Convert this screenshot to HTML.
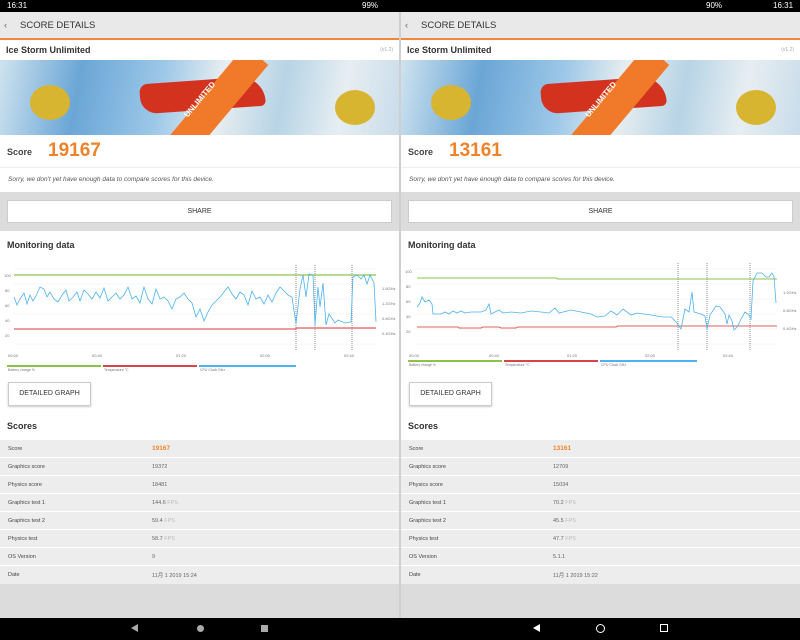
<!DOCTYPE html>
<html><head><meta charset="utf-8"><style>
*{margin:0;padding:0;box-sizing:border-box}
body{width:800px;height:640px;overflow:hidden;background:#dcdcdc;font-family:"Liberation Sans","Noto Sans CJK JP",sans-serif;position:relative}
.sb{position:absolute;left:0;top:0;width:800px;height:12px;background:#000;color:#fff;font-size:8px;line-height:12px}
.nav{position:absolute;left:0;top:618px;width:800px;height:22px;background:#000}
.panel{position:absolute;top:12px;width:399px;height:606px;background:#dcdcdc;overflow:hidden}
.hdr{height:28px;background:#e9e9e9;border-bottom:2px solid #f0883a;font-size:9.5px;color:#333;line-height:27px;padding-left:20px;position:relative}
.card{background:#fff}
.t1{height:20px;font-size:9px;font-weight:bold;color:#333;line-height:20px;padding-left:6px;position:relative}
.t1 span{position:absolute;right:6px;font-size:5px;color:#aaa;font-weight:normal}
.ban{height:75px;position:relative;overflow:hidden;background:linear-gradient(100deg,#cfe3ef 0%,#6aa6d6 20%,#9cc7e8 40%,#e8eef0 55%,#b7d4e6 70%,#e7eef2 85%,#c9dcea 100%)}
.score{height:33px;border-bottom:1px solid #eee;position:relative}
.score b{position:absolute;left:7px;top:12px;font-size:9px;color:#444}
.score i{position:absolute;left:48px;top:5px;font-size:19px;font-weight:bold;color:#f0832a;font-style:normal}
.sorry{height:24px;font-size:6.5px;font-style:italic;color:#555;line-height:24px;padding-left:8px}
.share{margin:8px 7px 0;height:23px;background:#fff;border:1px solid #ccc;text-align:center;font-size:7px;line-height:22px;color:#333}
.mon{margin-top:8px;background:#fff;height:180px;position:relative}
.mon h3{font-size:9px;color:#333;padding:9px 7px;height:26px}
.dg{position:absolute;left:8px;top:151px;width:83px;height:24px;border:1px solid #ccc;box-shadow:0 1px 2px #ccc;font-size:7px;line-height:22px;text-align:center;color:#333}
.sc{background:#fff;height:28px;margin-top:0;font-size:9px;font-weight:bold;color:#333;padding:10px 7px}
table{width:100%;border-collapse:collapse;font-size:5.5px;color:#444;background:#ededed}
td{height:18px;border-top:1px solid #fff;padding-left:8px}
td.v{padding-left:0;width:247px;color:#666}
td.v.o{color:#f0832a;font-weight:bold;font-size:6.5px}
.g{color:#bbb}
</style></head><body>
<div class="sb"><span style="position:absolute;left:7px">16:31</span><span style="position:absolute;left:362px">99%</span><span style="position:absolute;left:706px">90%</span><span style="position:absolute;left:773px">16:31</span></div>

<!-- LEFT -->
<div class="panel" style="left:0">
<div class="hdr"><span style="position:absolute;left:4px;color:#666">‹</span>SCORE DETAILS</div>
<div class="card">
<div class="t1">Ice Storm Unlimited<span>(v1.2)</span></div>
<div class="ban">
<div style="position:absolute;left:140px;top:20px;width:125px;height:30px;background:#d2321e;border-radius:10px 30px 6px 20px;transform:rotate(-4deg)"></div>
<div style="position:absolute;left:30px;top:25px;width:40px;height:35px;background:#d7b530;border-radius:50%"></div>
<div style="position:absolute;left:335px;top:30px;width:40px;height:35px;background:#d7b530;border-radius:50%"></div>
<div style="position:absolute;left:200px;top:-20px;width:30px;height:130px;background:#f07a2a;transform:rotate(40deg)"></div>
<div style="position:absolute;left:178px;top:35px;color:#fff;font-size:8px;font-weight:bold;transform:rotate(-50deg)">UNLIMITED</div>
</div>
<div class="score"><b>Score</b><i>19167</i></div>
<div class="sorry">Sorry, we don't yet have enough data to compare scores for this device.</div>
</div>
<div class="share">SHARE</div>
<div class="mon"><h3>Monitoring data</h3>
<svg width="399" height="150" style="position:absolute;left:0;top:26px" font-family="Liberation Sans" font-size="4" fill="#777">
<g stroke="#eee" stroke-width="0.5"><line x1="14" y1="12" x2="376" y2="12"/><line x1="14" y1="27" x2="376" y2="27"/><line x1="14" y1="42" x2="376" y2="42"/><line x1="14" y1="57" x2="376" y2="57"/><line x1="14" y1="72" x2="376" y2="72"/><line x1="14" y1="87" x2="376" y2="87"/></g>
<text x="4" y="20">100</text><text x="5" y="35">80</text><text x="5" y="50">60</text><text x="5" y="65">40</text><text x="5" y="80">20</text>
<text x="382" y="33">1.6GHz</text><text x="382" y="48">1.2GHz</text><text x="382" y="63">0.8GHz</text><text x="382" y="78">0.4GHz</text>
<text x="8" y="100">00:00</text><text x="92" y="100">00:40</text><text x="176" y="100">01:20</text><text x="260" y="100">02:00</text><text x="344" y="100">02:40</text>
<g stroke="#444" stroke-dasharray="1,1" stroke-width="0.6"><line x1="296" y1="8" x2="296" y2="93"/><line x1="315" y1="8" x2="315" y2="93"/><line x1="352" y1="8" x2="352" y2="93"/></g>
<line x1="14" y1="18" x2="376" y2="18" stroke="#8bc34a" stroke-width="1.2"/>
<polyline points="14,72 296,72 296,71 376,71" stroke="#e06060" stroke-width="1.2" fill="none"/>
<polyline fill="none" stroke="#4db3f0" stroke-width="0.8" points="14,40 17,48 20,42 24,36 27,47 30,38 33,44 36,39 40,30 44,32 47,40 50,35 54,42 58,45 62,38 66,33 69,44 73,40 77,35 80,44 84,33 88,37 92,42 96,35 100,41 104,31 108,44 112,40 116,36 120,42 124,38 128,30 132,42 136,39 140,46 144,30 148,42 152,47 156,32 160,42 164,40 168,44 172,52 176,42 180,40 184,36 188,42 192,46 196,60 200,52 204,64 208,55 212,48 216,44 220,40 224,35 228,30 232,37 236,42 240,35 244,38 248,48 252,34 256,42 260,40 264,47 268,38 272,45 276,36 280,30 284,34 288,38 292,40 296,67 300,32 303,18 306,40 309,17 313,18 315,68 318,30 320,50 323,26 326,68 329,57 335,66 338,63 345,66 351,65 353,20 357,18 361,22 364,18 367,27 370,18 374,26 376,65"/>
</svg>
<div style="position:absolute;left:7px;top:134px;width:94px;height:2px;background:#8bc34a"></div>
<div style="position:absolute;left:103px;top:134px;width:94px;height:2px;background:#d94545"></div>
<div style="position:absolute;left:199px;top:134px;width:97px;height:2px;background:#4db3f0"></div>
<div style="position:absolute;left:8px;top:137px;font-size:3.5px;color:#777">Battery charge %</div>
<div style="position:absolute;left:104px;top:137px;font-size:3.5px;color:#777">Temperature °C</div>
<div style="position:absolute;left:200px;top:137px;font-size:3.5px;color:#777">CPU Clock GHz</div>
<div class="dg">DETAILED GRAPH</div>
</div>
<div class="sc">Scores</div>
<table>
<tr><td>Score</td><td class="v o">19167</td></tr>
<tr><td>Graphics score</td><td class="v">19372</td></tr>
<tr><td>Physics score</td><td class="v">18481</td></tr>
<tr><td>Graphics test 1</td><td class="v">144.6 <span class="g">FPS</span></td></tr>
<tr><td>Graphics test 2</td><td class="v">59.4 <span class="g">FPS</span></td></tr>
<tr><td>Physics test</td><td class="v">58.7 <span class="g">FPS</span></td></tr>
<tr><td>OS Version</td><td class="v">9</td></tr>
<tr><td>Date</td><td class="v">11月 1 2019 15:24</td></tr>
</table>
</div>

<div style="position:absolute;left:399px;top:12px;width:2px;height:606px;background:#cfcfcf"></div>

<!-- RIGHT -->
<div class="panel" style="left:401px">
<div class="hdr"><span style="position:absolute;left:4px;color:#666">‹</span>SCORE DETAILS</div>
<div class="card">
<div class="t1">Ice Storm Unlimited<span>(v1.2)</span></div>
<div class="ban">
<div style="position:absolute;left:140px;top:20px;width:125px;height:30px;background:#d2321e;border-radius:10px 30px 6px 20px;transform:rotate(-4deg)"></div>
<div style="position:absolute;left:30px;top:25px;width:40px;height:35px;background:#d7b530;border-radius:50%"></div>
<div style="position:absolute;left:335px;top:30px;width:40px;height:35px;background:#d7b530;border-radius:50%"></div>
<div style="position:absolute;left:200px;top:-20px;width:30px;height:130px;background:#f07a2a;transform:rotate(40deg)"></div>
<div style="position:absolute;left:178px;top:35px;color:#fff;font-size:8px;font-weight:bold;transform:rotate(-50deg)">UNLIMITED</div>
</div>
<div class="score"><b>Score</b><i>13161</i></div>
<div class="sorry">Sorry, we don't yet have enough data to compare scores for this device.</div>
</div>
<div class="share">SHARE</div>
<div class="mon"><h3>Monitoring data</h3>
<svg width="399" height="150" style="position:absolute;left:0;top:26px" font-family="Liberation Sans" font-size="4" fill="#777">
<g stroke="#eee" stroke-width="0.5"><line x1="14" y1="12" x2="376" y2="12"/><line x1="14" y1="27" x2="376" y2="27"/><line x1="14" y1="42" x2="376" y2="42"/><line x1="14" y1="57" x2="376" y2="57"/><line x1="14" y1="72" x2="376" y2="72"/><line x1="14" y1="87" x2="376" y2="87"/></g>
<text x="4" y="16">100</text><text x="5" y="31">80</text><text x="5" y="46">60</text><text x="5" y="61">40</text><text x="5" y="76">20</text>
<text x="382" y="37">1.2GHz</text><text x="382" y="55">0.8GHz</text><text x="382" y="73">0.4GHz</text>
<text x="8" y="100">00:00</text><text x="88" y="100">00:40</text><text x="166" y="100">01:20</text><text x="244" y="100">02:00</text><text x="322" y="100">02:40</text>
<g stroke="#444" stroke-dasharray="1,1" stroke-width="0.6"><line x1="277" y1="6" x2="277" y2="93"/><line x1="306" y1="6" x2="306" y2="93"/><line x1="349" y1="6" x2="349" y2="93"/></g>
<polyline points="16,21 155,21 157,22 376,22" stroke="#8bc34a" stroke-width="1" fill="none"/>
<polyline points="16,70 57,70 58,71 80,71 82,70 98,70 100,71 115,71 117,70 215,70 217,69 376,69" stroke="#e06060" stroke-width="1" fill="none"/>
<polyline fill="none" stroke="#4db3f0" stroke-width="0.8" points="16,50 19,46 21,40 24,45 28,43 31,47 32,57 40,57 44,55 48,57 52,54 56,56 60,54 64,56 70,55 80,55 85,53 88,47 90,57 94,55 98,53 102,56 110,55 120,56 130,54 140,55 148,56 154,51 158,56 170,53 180,55 190,57 196,60 204,59 210,54 216,58 222,52 230,58 236,56 250,58 262,60 270,60 276,66 280,72 284,52 288,55 291,35 293,55 300,57 304,59 306,72 309,58 315,49 319,50 324,57 326,67 328,58 331,64 333,73 337,69 340,62 344,55 348,58 350,62 352,24 356,16 361,16 365,20 368,20 371,16 373,20 375,46"/>
</svg>
<div style="position:absolute;left:7px;top:129px;width:94px;height:2px;background:#8bc34a"></div>
<div style="position:absolute;left:103px;top:129px;width:94px;height:2px;background:#d94545"></div>
<div style="position:absolute;left:199px;top:129px;width:97px;height:2px;background:#4db3f0"></div>
<div style="position:absolute;left:8px;top:132px;font-size:3.5px;color:#777">Battery charge %</div>
<div style="position:absolute;left:104px;top:132px;font-size:3.5px;color:#777">Temperature °C</div>
<div style="position:absolute;left:200px;top:132px;font-size:3.5px;color:#777">CPU Clock GHz</div>
<div class="dg">DETAILED GRAPH</div>
</div>
<div class="sc">Scores</div>
<table>
<tr><td>Score</td><td class="v o">13161</td></tr>
<tr><td>Graphics score</td><td class="v">12709</td></tr>
<tr><td>Physics score</td><td class="v">15034</td></tr>
<tr><td>Graphics test 1</td><td class="v">70.2 <span class="g">FPS</span></td></tr>
<tr><td>Graphics test 2</td><td class="v">45.5 <span class="g">FPS</span></td></tr>
<tr><td>Physics test</td><td class="v">47.7 <span class="g">FPS</span></td></tr>
<tr><td>OS Version</td><td class="v">5.1.1</td></tr>
<tr><td>Date</td><td class="v">11月 1 2019 15:22</td></tr>
</table>
</div>

<div class="nav">
<div style="position:absolute;left:131px;top:6px;width:0;height:0;border-top:4px solid transparent;border-bottom:4px solid transparent;border-right:7px solid #aaa"></div>
<div style="position:absolute;left:197px;top:7px;width:7px;height:7px;border-radius:50%;background:#aaa"></div>
<div style="position:absolute;left:261px;top:7px;width:7px;height:7px;background:#aaa"></div>
<div style="position:absolute;left:533px;top:6px;width:0;height:0;border-top:4px solid transparent;border-bottom:4px solid transparent;border-right:7px solid #fff"></div>
<div style="position:absolute;left:596px;top:6px;width:9px;height:9px;border-radius:50%;border:1.5px solid #fff"></div>
<div style="position:absolute;left:660px;top:6px;width:8px;height:8px;border:1.5px solid #fff"></div>
</div>
</body></html>
